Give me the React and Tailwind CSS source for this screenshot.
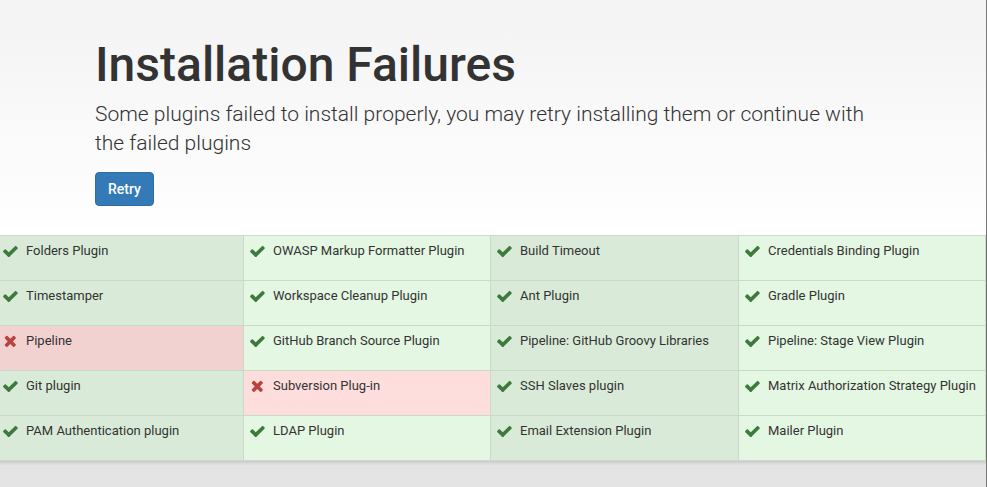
import React from "react";

const plugins = [
  ["Folders Plugin", "OWASP Markup Formatter Plugin", "Build Timeout", "Credentials Binding Plugin"],
  ["Timestamper", "Workspace Cleanup Plugin", "Ant Plugin", "Gradle Plugin"],
  ["Pipeline", "GitHub Branch Source Plugin", "Pipeline: GitHub Groovy Libraries", "Pipeline: Stage View Plugin"],
  ["Git plugin", "Subversion Plug-in", "SSH Slaves plugin", "Matrix Authorization Strategy Plugin"],
  ["PAM Authentication plugin", "LDAP Plugin", "Email Extension Plugin", "Mailer Plugin"],
];

const failed = ["Pipeline", "Subversion Plug-in"];

function CheckIcon() {
  return (
    <svg viewBox="110 300 1580 1150" className="w-[15px] h-[12px] fill-[#3d7a3b]">
      <path d="M1671 566q0 40-28 68l-724 724-136 136q-28 28-68 28t-68-28l-136-136-362-362q-28-28-28-68t28-68l136-136q28-28 68-28t68 28l294 295 656-657q28-28 68-28t68 28l136 136q28 28 28 68z" />
    </svg>
  );
}

function CrossIcon() {
  return (
    <svg viewBox="120 300 1380 1240" className="w-[13px] h-[12px] fill-[#b9433f]">
      <path d="M1490 1322q0 40-28 68l-136 136q-28 28-68 28t-68-28l-294-294-294 294q-28 28-68 28t-68-28l-136-136q-28-28-28-68t28-68l294-294-294-294q-28-28-28-68t28-68l136-136q28-28 68-28t68 28l294 294 294-294q28-28 68-28t68 28l136 136q28 28 28 68t-28 68l-294 294 294 294q28 28 28 68z" />
    </svg>
  );
}

function Cell({ name, col }) {
  const bad = failed.includes(name);
  const odd = col % 2 === 0;
  let bg = odd ? "bg-[#d9ebd8]" : "bg-[#e4f7e3]";
  if (bad) bg = odd ? "bg-[#f2d1d1]" : "bg-[#fedddd]";
  return (
    <div className={`${bg} h-[45px] border-r border-b border-[#c9dac8] flex items-start pt-[6px] pl-[6px] text-[13px] leading-[18px] text-[#333]`}>
      <span className="w-[23px] h-[18px] flex items-center">
        {bad ? <CrossIcon /> : <CheckIcon />}
      </span>
      <span>{name}</span>
    </div>
  );
}

export default function App() {
  return (
    <div className="w-[987px] h-[487px] overflow-hidden bg-[#e4e4e4] flex" style={{ fontFamily: "Roboto, 'Liberation Sans', sans-serif" }}>
      <div className="w-[987px] h-full border-r-[1px] border-[#777] flex flex-col">
        <div className="h-[235px] shrink-0 bg-gradient-to-b from-[#f3f3f3] to-white pl-[95px] pt-[36px]">
          <h1 className="text-[48px] leading-[57px] font-medium text-[#333]">Installation Failures</h1>
          <p className="mt-[7px] w-[780px] text-[21px] leading-[29px] font-light text-[#333]">
            Some plugins failed to install properly, you may retry installing them or continue with the failed plugins
          </p>
          <button className="mt-[14px] h-[34px] px-[12px] rounded-[4px] bg-[#337ab7] border border-[#2e6da4] text-white text-[14px] font-medium">
            Retry
          </button>
        </div>
        <div className="ml-[-3px] w-[989px] grid grid-cols-[247px_247px_248px_247px] border-t border-[#cfd8cf] shadow-[0_2px_3px_rgba(0,0,0,0.12)]">
          {plugins.map((row) =>
            row.map((name, i) => <Cell key={name} name={name} col={i} />)
          )}
        </div>
      </div>
    </div>
  );
}
